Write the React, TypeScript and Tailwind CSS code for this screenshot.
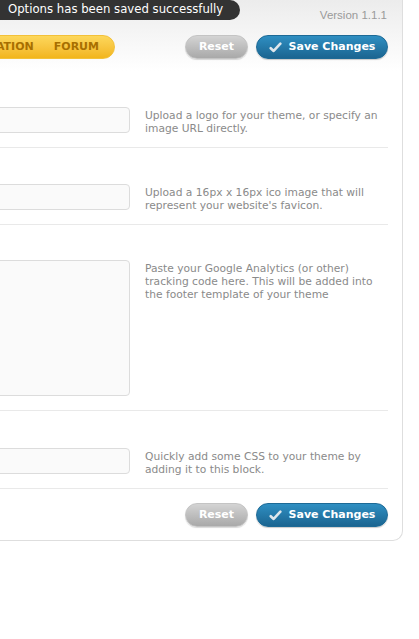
import React from "react";

const Check = () => (
  <svg width="13" height="11" viewBox="0 0 14 12" className="mr-[7px]">
    <path d="M1.8 6.8 L5 9.8 L12.3 1.8" fill="none" stroke="#dfe7ec" strokeWidth="2.8" strokeLinecap="round" strokeLinejoin="round" />
  </svg>
);

const bfont = { fontFamily: '"DejaVu Sans", sans-serif' };

const Buttons = () => (
  <div className="flex items-center gap-[8px]">
    <button className="h-[24px] w-[63px] rounded-full bg-gradient-to-b from-[#d4d4d4] to-[#a9a9a9] border border-[#c4c4c4] text-white font-bold text-[11px] shadow-[0_1px_1px_rgba(0,0,0,0.15)]" style={bfont}>
      Reset
    </button>
    <button className="h-[24px] w-[132px] rounded-full bg-gradient-to-b from-[#2f8fc2] to-[#1b6591] border border-[#1d6a96] text-white font-bold text-[11px] flex items-center justify-center shadow-[0_1px_1px_rgba(0,0,0,0.2)]" style={bfont}>
      <Check />
      Save Changes
    </button>
  </div>
);

const dfont = { fontFamily: '"DejaVu Sans", sans-serif' };

const Row = ({ children, text, last }: { children: React.ReactNode; text: React.ReactNode; last?: boolean }) => (
  <div className={last ? "flex items-start pt-[37px] pb-[14px] border-b border-[#e9e9e9] mr-[14px]" : "flex items-start pt-[36px] pb-[14px] border-b border-[#e9e9e9] mr-[14px]"}>
    <div className="w-[130px] shrink-0 overflow-visible flex justify-end">{children}</div>
    <div className="ml-[15px] mt-[2px] -mb-[2px] text-[10.7px] leading-[13px] text-[#8a8a8a] w-[240px]" style={dfont}>
      {text}
    </div>
  </div>
);

const Input = () => (
  <div className="shrink-0 w-[200px] h-[26px] bg-[#fafafa] border border-[#dcdcdc] rounded-[4px]" />
);

export default function App() {
  return (
    <div className="relative w-[419px] h-[639px] bg-white overflow-hidden">
      <div className="absolute left-0 top-0 h-[20px] w-[240px] bg-[#333333] rounded-br-[10px] rounded-tr-[10px] text-white text-[11.7px] leading-[19px] pl-[8px] z-10 whitespace-nowrap" style={dfont}>
        Options has been saved successfully
      </div>
      <div className="w-[403px] border-r border-b border-[#dedede] rounded-br-[10px]">
        <div className="h-[71px] bg-gradient-to-b from-[#ececec] to-[#ffffff] pr-[14px]">
          <div className="flex justify-end pt-[9px] pr-[1px] text-[11.5px] text-[#9a9a9a] leading-[13px]" style={{ fontFamily: '"Liberation Sans", sans-serif' }}>
            Version 1.1.1
          </div>
          <div className="flex items-center justify-between mt-[13px]">
            <div className="w-[115px] flex justify-end">
              <div className="shrink-0 h-[24px] rounded-full bg-gradient-to-b from-[#fdd75a] to-[#f2b51a] border border-[#f3c13a] flex items-center gap-[20px] pr-[15px] pl-[20px] text-[11px] font-bold text-[#a86f00] whitespace-nowrap" style={dfont}>
                <span>DOCUMENTATION</span>
                <span>FORUM</span>
              </div>
            </div>
            <Buttons />
          </div>
        </div>
        <Row text={<>Upload a logo for your theme, or specify an image URL directly.</>}>
          <Input />
        </Row>
        <Row text={<>Upload a 16px x 16px ico image that will represent your website's favicon.</>}>
          <Input />
        </Row>
        <div className="-mt-[1px]">
          <Row text={<>Paste your Google Analytics (or other) tracking code here. This will be added into the footer template of your theme</>}>
            <div className="shrink-0 w-[200px] h-[136px] bg-[#fafafa] border border-[#dcdcdc] rounded-[4px]" />
          </Row>
        </div>
        <Row last text={<>Quickly add some CSS to your theme by adding it to this block.</>}>
          <Input />
        </Row>
        <div className="flex justify-end pt-[14px] pb-[13px] pr-[14px]">
          <Buttons />
        </div>
      </div>
    </div>
  );
}
